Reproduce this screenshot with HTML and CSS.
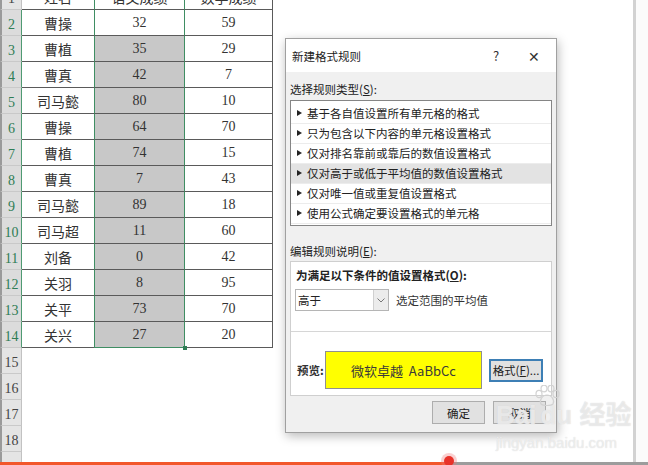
FILE: index.html
```html
<!DOCTYPE html>
<html>
<head>
  <meta charset="UTF-8">
  <title>新建格式规则</title>
  <link rel="stylesheet" href="styles.css">
</head>
<body>
  <div class="screen">
    <div class="sheet">
      <div class="grid">
        <div class="rh">1</div><div class="c">姓名</div><div class="c colb">语文成绩</div><div class="c">数学成绩</div>
        <div class="rh sel">2</div><div class="c">曹操</div><div class="c colb">32</div><div class="c">59</div>
        <div class="rh sel">3</div><div class="c">曹植</div><div class="c colb shade">35</div><div class="c">29</div>
        <div class="rh sel">4</div><div class="c">曹真</div><div class="c colb shade">42</div><div class="c">7</div>
        <div class="rh sel">5</div><div class="c">司马懿</div><div class="c colb shade">80</div><div class="c">10</div>
        <div class="rh sel">6</div><div class="c">曹操</div><div class="c colb shade">64</div><div class="c">70</div>
        <div class="rh sel">7</div><div class="c">曹植</div><div class="c colb shade">74</div><div class="c">15</div>
        <div class="rh sel">8</div><div class="c">曹真</div><div class="c colb shade">7</div><div class="c">43</div>
        <div class="rh sel">9</div><div class="c">司马懿</div><div class="c colb shade">89</div><div class="c">18</div>
        <div class="rh sel">10</div><div class="c">司马超</div><div class="c colb shade">11</div><div class="c">60</div>
        <div class="rh sel">11</div><div class="c">刘备</div><div class="c colb shade">0</div><div class="c">42</div>
        <div class="rh sel">12</div><div class="c">关羽</div><div class="c colb shade">8</div><div class="c">95</div>
        <div class="rh sel">13</div><div class="c">关平</div><div class="c colb shade">73</div><div class="c">70</div>
        <div class="rh sel">14</div><div class="c">关兴</div><div class="c colb shade last">27</div><div class="c">20</div>
        <div class="rh">15</div><div class="e"></div><div class="e"></div><div class="e"></div>
        <div class="rh">16</div><div class="e"></div><div class="e"></div><div class="e"></div>
        <div class="rh">17</div><div class="e"></div><div class="e"></div><div class="e"></div>
        <div class="rh">18</div><div class="e"></div><div class="e"></div><div class="e"></div>
        <div class="rh"></div><div class="e"></div><div class="e"></div><div class="e"></div>
      </div>
    </div>
    <div class="edge"></div>
    <div class="rest"></div>
  </div>
  <div class="progress"><div class="played"></div><div class="left"></div></div>
  <div class="knob"></div>

  <div class="dialog">
    <div class="titlebar">
      <span class="title">新建格式规则</span>
      <span class="help">?</span>
      <span class="close">✕</span>
    </div>
    <div class="body">
      <div class="label">选择规则类型(<u>S</u>):</div>
      <ul class="rules">
        <li>基于各自值设置所有单元格的格式</li>
        <li>只为包含以下内容的单元格设置格式</li>
        <li>仅对排名靠前或靠后的数值设置格式</li>
        <li class="active">仅对高于或低于平均值的数值设置格式</li>
        <li>仅对唯一值或重复值设置格式</li>
        <li>使用公式确定要设置格式的单元格</li>
      </ul>
      <div class="label desc">编辑规则说明(<u>E</u>):</div>
      <div class="editor">
        <div class="cond">为满足以下条件的值设置格式(<u>O</u>):</div>
        <div class="condrow">
          <div class="combo"><span class="val">高于</span><span class="arrow">
            <svg width="8" height="5" viewBox="0 0 8 5"><path d="M0.5 0.5 L4 4 L7.5 0.5" fill="none" stroke="#777" stroke-width="1"/></svg>
          </span></div>
          <span class="hint">选定范围的平均值</span>
        </div>
        <div class="sep"></div>
        <div class="preview">
          <span class="plabel">预览:</span>
          <div class="sample">微软卓越&nbsp; AaBbCc</div>
          <button class="btn fmt">格式(<u>F</u>)...</button>
        </div>
      </div>
      <div class="actions">
        <button class="btn">确定</button>
        <button class="btn">取消</button>
      </div>
    </div>
  </div>

  <div class="mark">
    <div class="mark-top">Bai<span class="paw">
      <svg width="26" height="22" viewBox="0 0 26 22"><g fill="none" stroke="#d2d2d2" stroke-width="1.2"><ellipse cx="5" cy="9" rx="3" ry="3.6"/><ellipse cx="10" cy="3.5" rx="3" ry="3.3"/><ellipse cx="17" cy="3.5" rx="3" ry="3.3"/><ellipse cx="22" cy="9" rx="3" ry="3.6"/><path d="M13 10 C8 10 5 16 7 19 C9 21 17 21 19 19 C21 16 18 10 13 10 Z"/></g></svg>
    </span>du 经验</div>
    <div class="mark-url">jingyan.baidu.com</div>
  </div>
</body>
</html>
```

FILE: styles.css
```css
body {
  margin: 0;
  width: 648px;
  height: 465px;
  overflow: hidden;
  position: relative;
  background: #fff;
  font-family: "Liberation Serif", "Noto Sans CJK SC", serif;
}
.screen {
  display: flex;
  height: 462px;
}
.sheet {
  width: 633px;
  overflow: hidden;
}
.edge {
  width: 3px;
  background: #d2d2d2;
}
.rest {
  flex: 1;
  background: #fbfbfb;
}

/* spreadsheet */
.grid {
  display: grid;
  grid-template-columns: 22px 73px 90px 88px;
  grid-auto-rows: 26px;
  margin-top: -16px;
}
.rh {
  background: #e4e4e4;
  border-bottom: 1px solid #c9c9c9;
  border-right: 1px solid #c2c2c2;
  border-left: 2px solid #9a9a9a;
  box-sizing: border-box;
  font-size: 14px;
  color: #444;
  display: flex;
  align-items: flex-end;
  justify-content: center;
  padding-bottom: 2px;
}
.rh.sel {
  background: #dcdcdc;
  color: #2f7d55;
  border-right: 1px solid #4f9a72;
}
.c {
  box-sizing: border-box;
  border-bottom: 1px solid #5a5a5a;
  border-right: 1px solid #5a5a5a;
  display: flex;
  align-items: center;
  justify-content: center;
  font-size: 14px;
  color: #333;
}
.colb {
  border-left: 1px solid #3f8e63;
  border-right: 1px solid #3f8e63;
  margin-left: -1px;
}
.shade {
  background: #c8c8c8;
}
.last {
  border-bottom: 1px solid #3f8e63;
  position: relative;
}
.last::after {
  content: "";
  position: absolute;
  right: -3px;
  bottom: -3px;
  width: 4px;
  height: 4px;
  background: #2f7d55;
}
.e {
  background: #fff;
}

/* video bar */
.progress {
  display: flex;
  height: 3px;
}
.played {
  width: 450px;
  background: #f2572b;
}
.left {
  flex: 1;
  background: #9c9c9c;
}
.knob {
  position: absolute;
  left: 444px;
  top: 456px;
  width: 10px;
  height: 10px;
  border-radius: 50%;
  background: #e8322a;
  box-shadow: 0 0 0 3px rgba(240, 120, 120, .35);
}

/* dialog */
.dialog {
  position: absolute;
  left: 285px;
  top: 38px;
  width: 270px;
  height: 393px;
  border: 1px solid #a0a0a0;
  background: #f0f0f0;
  box-shadow: 1px 3px 10px rgba(0, 0, 0, .28);
  font-family: "Noto Sans CJK SC", "Noto Sans", sans-serif;
  font-size: 11.5px;
  color: #222;
}
.titlebar {
  height: 33px;
  background: #fff;
  display: flex;
  align-items: center;
  padding-left: 6px;
}
.title {
  flex: 1;
}
.help {
  width: 14px;
  margin-right: 21px;
  font-size: 13px;
  color: #333;
}
.close {
  width: 16px;
  margin-right: 12px;
  font-size: 14px;
  color: #333;
}
.body {
  padding: 9px 4px 0 4px;
}
.label {
  line-height: 16px;
  height: 16px;
  margin-bottom: 3px;
}
.rules {
  list-style: none;
  margin: 0;
  padding: 3px 0 0 0;
  height: 126px;
  box-sizing: border-box;
  border: 1px solid #858585;
  background: #fff;
}
.rules li {
  height: 20px;
  line-height: 19px;
  box-sizing: border-box;
  border-bottom: 1px solid #ececec;
  padding-left: 16px;
  position: relative;
}
.rules li::before {
  content: "";
  position: absolute;
  left: 6px;
  top: 6px;
  border-left: 5px solid #222;
  border-top: 3.5px solid transparent;
  border-bottom: 3.5px solid transparent;
}
.rules li.active {
  background: #e3e3e3;
}
.desc {
  margin-top: 17px;
  margin-bottom: 2px;
}
.editor {
  height: 135px;
  box-sizing: border-box;
  border: 1px solid #cfcfcf;
  background: #fff;
}
.cond {
  font-weight: bold;
  line-height: 16px;
  padding: 5px 0 0 5px;
}
.condrow {
  display: flex;
  align-items: center;
  margin: 6px 0 0 4px;
}
.combo {
  width: 94px;
  height: 22px;
  box-sizing: border-box;
  border: 1px solid #b5b5b5;
  display: flex;
}
.val {
  flex: 1;
  padding-left: 2px;
  line-height: 20px;
}
.arrow {
  width: 14px;
  background: #ececec;
  border-left: 1px solid #d0d0d0;
  display: flex;
  align-items: center;
  justify-content: center;
}
.hint {
  margin-left: 7px;
  color: #333;
}
.sep {
  height: 1px;
  background: #d6d6d6;
  margin-top: 20px;
}
.preview {
  display: flex;
  align-items: center;
  margin-top: 19px;
  padding-left: 6px;
}
.plabel {
  width: 28px;
  font-weight: bold;
  color: #333;
}
.sample {
  width: 157px;
  height: 38px;
  box-sizing: border-box;
  border: 1px solid #8f8f8f;
  background: #ffff00;
  display: flex;
  align-items: center;
  justify-content: center;
  font-size: 13px;
  color: #3a3a3a;
}
.btn {
  font-family: "Noto Sans CJK SC", "Noto Sans", sans-serif;
  font-size: 11.5px;
  color: #222;
  background: #e1e1e1;
  border: 1px solid #adadad;
  height: 23px;
  width: 53px;
  padding: 0;
}
.fmt {
  width: 54px;
  margin-left: 7px;
  border: 2px solid #3d7fb5;
}
.actions {
  display: flex;
  justify-content: flex-end;
  gap: 8px;
  margin-top: 5px;
  padding-right: 6px;
}

/* watermark */
.mark {
  position: absolute;
  left: 496px;
  top: 398px;
  color: rgba(255, 255, 255, .55);
  font-family: "Liberation Sans", "Noto Sans CJK SC", sans-serif;
  text-shadow: 0 0 1px #cfcfcf;
  pointer-events: none;
}
.mark-top {
  font-size: 26px;
  font-weight: bold;
  line-height: 34px;
  display: flex;
  align-items: flex-end;
}
.paw {
  width: 4px;
  position: relative;
  top: -17px;
  left: -2px;
}
.mark-url {
  font-size: 15px;
  line-height: 18px;
  margin-top: 2px;
}
```
